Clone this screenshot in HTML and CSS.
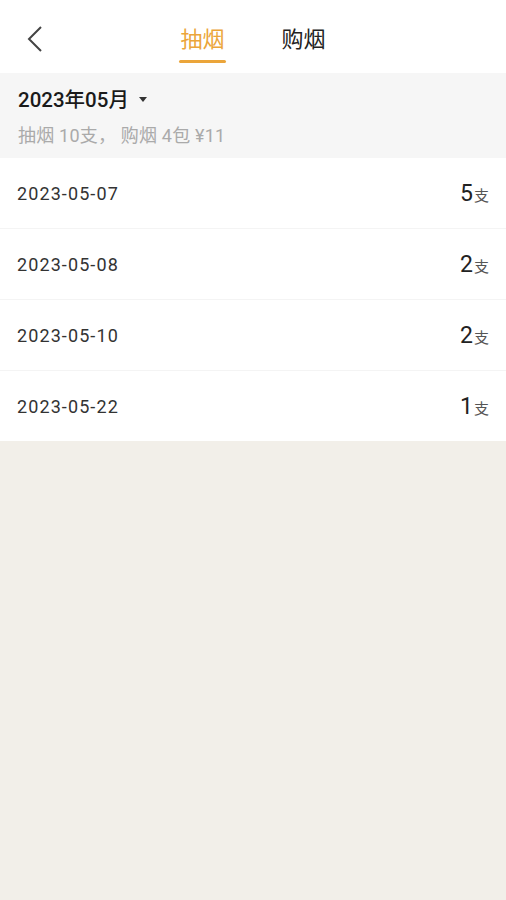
FILE: index.html
```html
<!DOCTYPE html>
<html lang="zh">
<head>
  <meta charset="UTF-8" />
  <meta name="viewport" content="width=device-width, initial-scale=1" />
  <title>抽烟记录</title>
  <link rel="stylesheet" href="styles.css">
</head>
<body>

  <div class="topbar">
    <div class="back">
      <svg width="16" height="26" viewBox="0 0 16 26"><path d="M14 1 L2 13 L14 25" fill="none" stroke="#444" stroke-width="2"/></svg>
    </div>
    <div class="tabs">
      <div class="tab active">抽烟</div>
      <div class="tab">购烟</div>
    </div>
  </div>

  <div class="summary">
    <div class="month">2023年05月 <span class="caret"></span></div>
    <div class="totals">抽烟 10支， 购烟 4包 ¥11</div>
  </div>

  <div class="list">
    <div class="row"><span class="date">2023-05-07</span><span class="num">5<small>支</small></span></div>
    <div class="row"><span class="date">2023-05-08</span><span class="num">2<small>支</small></span></div>
    <div class="row"><span class="date">2023-05-10</span><span class="num">2<small>支</small></span></div>
    <div class="row"><span class="date">2023-05-22</span><span class="num">1<small>支</small></span></div>
  </div>

</body>
</html>
```

FILE: styles.css
```css
body {
  margin: 0;
  font-family: Roboto, "Noto Sans CJK SC", sans-serif;
  background-color: #f2efe9;
  color: #222;
  min-height: 900px;
}
.topbar {
  height: 73px;
  background: #fff;
  position: relative;
}
.back {
  position: absolute;
  left: 27px;
  top: 26px;
}
.tabs {
  display: flex;
  justify-content: center;
  gap: 57px;
  padding-top: 24px;
}
.tab {
  font-size: 22px;
  line-height: 32px;
  color: #222;
  position: relative;
}
.tab.active {
  color: #eba53a;
}
.tab.active::after {
  content: "";
  position: absolute;
  left: -1px;
  right: -1px;
  top: 36px;
  height: 3px;
  border-radius: 2px;
  background: #eba53a;
}
.summary {
  background: #f6f6f6;
  height: 85px;
  padding: 0 18px;
  box-sizing: border-box;
}
.month {
  font-size: 20.5px;
  font-weight: 500;
  padding-top: 13px;
  line-height: 28px;
  color: #1a1a1a;
}
.caret {
  display: inline-block;
  border-left: 4px solid transparent;
  border-right: 4px solid transparent;
  border-top: 5px solid #333;
  vertical-align: middle;
  margin-left: 5px;
  margin-top: -4px;
}
.totals {
  font-size: 18px;
  color: #aaa;
  margin-top: 10px;
  line-height: 24px;
  letter-spacing: 0.2px;
}
.list {
  background: #fff;
}
.row {
  display: flex;
  justify-content: space-between;
  align-items: center;
  height: 70px;
  padding: 0 17px 0 17px;
  border-bottom: 1px solid #f4f4f4;
}
.row:last-child {
  border-bottom: none;
}
.date {
  font-size: 18px;
  letter-spacing: 1.1px;
  color: #333;
}
.num {
  font-size: 23px;
  color: #222;
}
.num small {
  font-size: 15px;
  color: #555;
  margin-left: 1px;
}
```
